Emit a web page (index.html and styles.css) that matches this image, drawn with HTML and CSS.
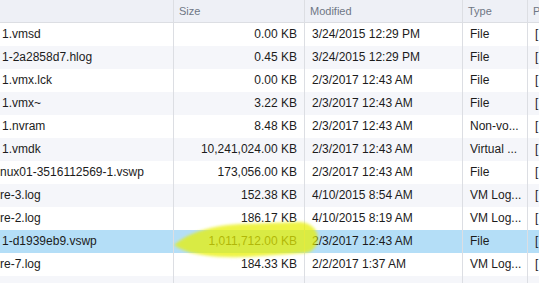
FILE: index.html
```html
<!DOCTYPE html>
<html lang="en">
<head>
    <meta charset="UTF-8">
    <title>Datastore Browser</title>
    <link rel="stylesheet" href="styles.css">
</head>
<body>
    <div class="grid">
        <div class="row head">
            <div class="cell"></div>
            <div class="cell">Size</div>
            <div class="cell">Modified</div>
            <div class="cell">Type</div>
            <div class="cell">P</div>
        </div>

        <div class="row">
            <div class="cell name">1.vmsd</div>
            <div class="cell size">0.00 KB</div>
            <div class="cell">3/24/2015 12:29 PM</div>
            <div class="cell">File</div>
            <div class="cell">[</div>
        </div>
        <div class="row alt">
            <div class="cell name">1-2a2858d7.hlog</div>
            <div class="cell size">0.45 KB</div>
            <div class="cell">3/24/2015 12:29 PM</div>
            <div class="cell">File</div>
            <div class="cell">[</div>
        </div>
        <div class="row">
            <div class="cell name">1.vmx.lck</div>
            <div class="cell size">0.00 KB</div>
            <div class="cell">2/3/2017 12:43 AM</div>
            <div class="cell">File</div>
            <div class="cell">[</div>
        </div>
        <div class="row alt">
            <div class="cell name">1.vmx~</div>
            <div class="cell size">3.22 KB</div>
            <div class="cell">2/3/2017 12:43 AM</div>
            <div class="cell">File</div>
            <div class="cell">[</div>
        </div>
        <div class="row">
            <div class="cell name">1.nvram</div>
            <div class="cell size">8.48 KB</div>
            <div class="cell">2/3/2017 12:43 AM</div>
            <div class="cell">Non-vo...</div>
            <div class="cell">[</div>
        </div>
        <div class="row alt">
            <div class="cell name">1.vmdk</div>
            <div class="cell size">10,241,024.00 KB</div>
            <div class="cell">2/3/2017 12:43 AM</div>
            <div class="cell">Virtual ...</div>
            <div class="cell">[</div>
        </div>
        <div class="row">
            <div class="cell name cut">nux01-3516112569-1.vswp</div>
            <div class="cell size">173,056.00 KB</div>
            <div class="cell">2/3/2017 12:43 AM</div>
            <div class="cell">File</div>
            <div class="cell">[</div>
        </div>
        <div class="row alt">
            <div class="cell name cut">re-3.log</div>
            <div class="cell size">152.38 KB</div>
            <div class="cell">4/10/2015 8:54 AM</div>
            <div class="cell">VM Log...</div>
            <div class="cell">[</div>
        </div>
        <div class="row">
            <div class="cell name cut">re-2.log</div>
            <div class="cell size">186.17 KB</div>
            <div class="cell">4/10/2015 8:19 AM</div>
            <div class="cell">VM Log...</div>
            <div class="cell">[</div>
        </div>
        <div class="row selected">
            <div class="cell name">1-d1939eb9.vswp</div>
            <div class="cell size">1,011,712.00 KB</div>
            <div class="cell">2/3/2017 12:43 AM</div>
            <div class="cell">File</div>
            <div class="cell">[</div>
        </div>
        <div class="row">
            <div class="cell name cut">re-7.log</div>
            <div class="cell size">184.33 KB</div>
            <div class="cell">2/2/2017 1:37 AM</div>
            <div class="cell">VM Log...</div>
            <div class="cell">[</div>
        </div>
        <div class="row alt">
            <div class="cell name"></div>
            <div class="cell size"></div>
            <div class="cell"></div>
            <div class="cell"></div>
            <div class="cell"></div>
        </div>

        <!-- highlighter mark over the selected size -->
        <svg class="marker" width="539" height="283" viewBox="0 0 539 283">
            <defs>
                <filter id="soft" x="-10%" y="-30%" width="120%" height="160%">
                    <feGaussianBlur stdDeviation="1.6"/>
                </filter>
            </defs>
            <path filter="url(#soft)" d="M174,245 C186,235 205,226 240,224 L300,222 C322,223 324,251 304,253 L245,257 C210,258 186,254 174,245 Z"/>
        </svg>
    </div>
</body>
</html>
```

FILE: styles.css
```css
:root {
    --head-bg: #eef0f6;
    --alt-bg: #f5f6fa;
    --select-bg: #b4def7;
    --line: #dcdee3;
    --text: #1c1c1c;
    --head-text: #6e7785;
}

* {
    margin: 0;
    padding: 0;
    box-sizing: border-box;
}

body {
    font-family: "Liberation Sans", Arial, sans-serif;
    font-size: 12px;
    color: var(--text);
    background: #fff;
    overflow: hidden;
}

.grid {
    position: relative;
    width: 539px;
    height: 283px;
    overflow: hidden;
}

.row {
    display: grid;
    grid-template-columns: 174px 131px 158px 65px 1fr;
    height: 23px;
    line-height: 23px;
}

.row.alt {
    background: var(--alt-bg);
}

.row.selected {
    background: var(--select-bg);
}

.cell {
    border-right: 1px solid var(--line);
    padding: 0 7px;
    white-space: nowrap;
    overflow: hidden;
}

.cell.name {
    padding-left: 2px;
}

.cell.name.cut {
    padding-left: 0;
}

.cell.size {
    text-align: right;
}

.head {
    background: var(--head-bg);
    border-bottom: 1px solid var(--line);
    color: var(--head-text);
    font-size: 11px;
    line-height: 22px;
}

.head .cell {
    padding-left: 5px;
}

.selected .size {
    color: #222;
}

.marker {
    position: absolute;
    top: 0;
    left: 0;
    pointer-events: none;
}

.marker path {
    fill: #e8f000;
    opacity: 0.72;
}
```
